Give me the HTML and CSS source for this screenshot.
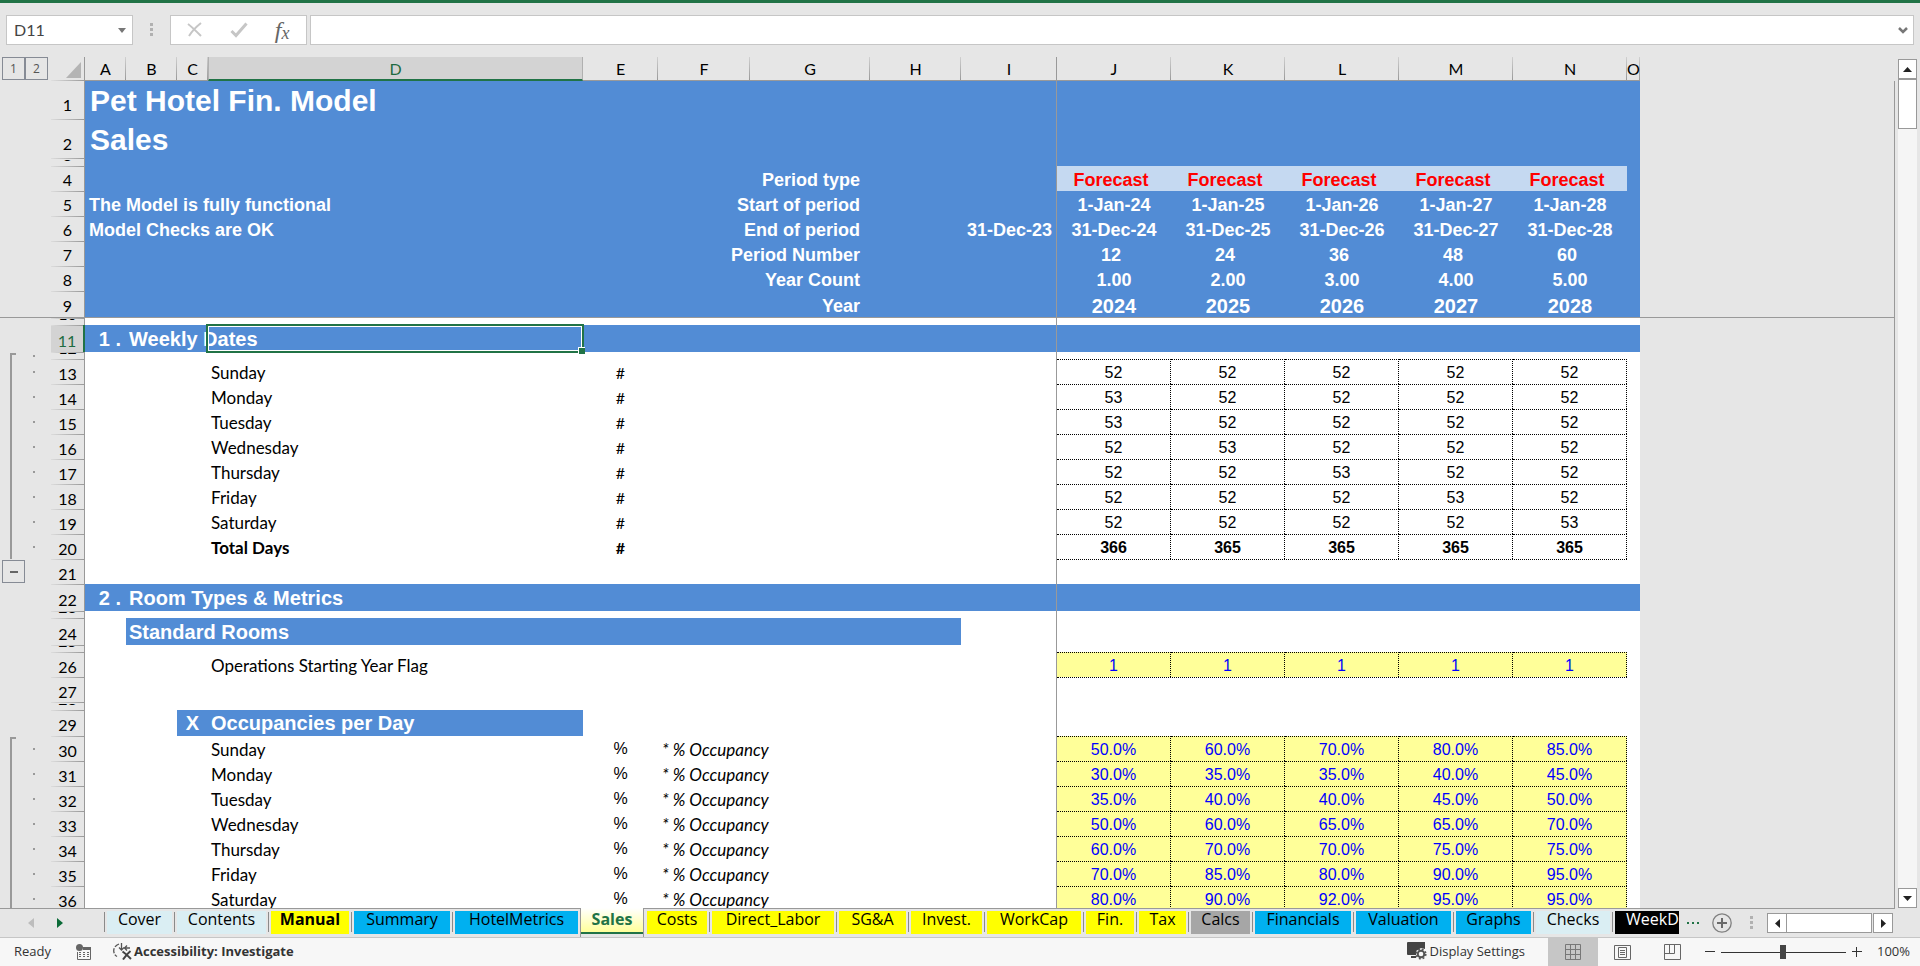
FILE: index.html
```html
<!DOCTYPE html>
<html lang="en">
<head>
<meta charset="utf-8">
<title>Pet Hotel Fin. Model - Sales</title>
<link rel="stylesheet" href="styles.css">
</head>
<body>
<div class="app">
<header class="formula-bar">
  <div class="namebox"><input type="text" value="D11" aria-label="Name box"><button type="button" aria-label="Open name list"><svg width="8" height="5" viewBox="0 0 8 5"><path d="M0 0h8L4 5z" fill="#777"/></svg></button></div>
  <svg class="grip" width="3" height="14" viewBox="0 0 3 14"><path d="M0 0h3v3H0zM0 5h3v3H0zM0 10h3v3H0z" fill="#b1b1b1"/></svg>
  <div class="fx-box">
    <button type="button" aria-label="Cancel"><svg width="18" height="16" viewBox="0 0 18 16"><path d="M2 2c4 3 9 8 13 12M15 1C10 5 6 9 3 14" fill="none" stroke="#c6c6c6" stroke-width="2"/></svg></button>
    <button type="button" aria-label="Enter"><svg width="18" height="16" viewBox="0 0 18 16"><path d="M1.500 9L6 13.500L16.500 1.500" fill="none" stroke="#c6c6c6" stroke-width="3"/></svg></button>
    <button type="button" class="fx" aria-label="Insert function"><i>f</i><i class="x">x</i></button>
  </div>
  <div class="formula"><input type="text" aria-label="Formula bar"><button type="button" aria-label="Expand formula bar"><svg width="10" height="7" viewBox="0 0 10 7"><path d="M1 1l4 4 4-4" fill="none" stroke="#777" stroke-width="2.500"/></svg></button></div>
</header>

<main class="sheet">
<div class="grid">
<table>
<colgroup><col class="cg"><col class="cr"><col class="ca"><col class="cb"><col class="cc"><col class="cd"><col class="ce"><col class="cf"><col class="cgg"><col class="ch"><col class="ci"><col class="cn"><col class="cn"><col class="cn"><col class="cn"><col class="cn"><col class="co"><col></colgroup>
<thead>
<tr><td class="levels"><div><button type="button">1</button><button type="button">2</button></div></td><td class="corner"><svg width="15" height="16" viewBox="0 0 15 16"><path d="M15 0v16H0z" fill="#b4b4b4"/></svg></td><th>A</th><th>B</th><th>C</th><th class="sel">D</th><th>E</th><th>F</th><th>G</th><th>H</th><th class="fzh">I</th><th>J</th><th>K</th><th>L</th><th>M</th><th>N</th><th>O</th><td></td></tr>
</thead>
<tbody>
<tr class="blue r38"><td class="gut"></td><th><span>1</span></th><td colspan="9" class="fz title">Pet Hotel Fin. Model</td><td colspan="6"></td><td class="out"></td></tr>
<tr class="blue r39"><td class="gut"></td><th><span>2</span></th><td colspan="9" class="fz title">Sales</td><td colspan="6"></td><td class="out"></td></tr>
<tr class="blue tiny8"><td class="gut"></td><th><span>3</span></th><td colspan="9" class="fz"></td><td colspan="6"></td><td class="out"></td></tr>
<tr class="blue hd"><td class="gut"></td><th><span>4</span></th><td colspan="4"></td><td colspan="3" class="cap">Period type</td><td></td><td class="fz"></td><td class="fc">Forecast</td><td class="fc">Forecast</td><td class="fc">Forecast</td><td class="fc">Forecast</td><td class="fc">Forecast</td><td></td><td class="out"></td></tr>
<tr class="blue hd"><td class="gut"></td><th><span>5</span></th><td colspan="4" class="msg">The Model is fully functional</td><td colspan="3" class="cap">Start of period</td><td></td><td class="fz"></td><td class="m">1-Jan-24</td><td class="m">1-Jan-25</td><td class="m">1-Jan-26</td><td class="m">1-Jan-27</td><td class="m">1-Jan-28</td><td></td><td class="out"></td></tr>
<tr class="blue hd"><td class="gut"></td><th><span>6</span></th><td colspan="4" class="msg">Model Checks are OK</td><td colspan="3" class="cap">End of period</td><td></td><td class="fz r">31-Dec-23</td><td class="m">31-Dec-24</td><td class="m">31-Dec-25</td><td class="m">31-Dec-26</td><td class="m">31-Dec-27</td><td class="m">31-Dec-28</td><td></td><td class="out"></td></tr>
<tr class="blue hd"><td class="gut"></td><th><span>7</span></th><td colspan="4"></td><td colspan="3" class="cap">Period Number</td><td></td><td class="fz"></td><td class="m pn">12</td><td class="m pn">24</td><td class="m pn">36</td><td class="m pn">48</td><td class="m pn">60</td><td></td><td class="out"></td></tr>
<tr class="blue hd"><td class="gut"></td><th><span>8</span></th><td colspan="4"></td><td colspan="3" class="cap">Year Count</td><td></td><td class="fz"></td><td class="m">1.00</td><td class="m">2.00</td><td class="m">3.00</td><td class="m">4.00</td><td class="m">5.00</td><td></td><td class="out"></td></tr>
<tr class="blue hd r26"><td class="gut"></td><th><span>9</span></th><td colspan="4"></td><td colspan="3" class="cap">Year</td><td></td><td class="fz"></td><td class="m yr">2024</td><td class="m yr">2025</td><td class="m yr">2026</td><td class="m yr">2027</td><td class="m yr">2028</td><td></td><td class="out"></td></tr>
<tr class="tiny8 freeze"><td class="gut"></td><th><span>10</span></th><td colspan="9" class="fz"></td><td colspan="6"></td><td class="out"></td></tr>
<tr class="blue sec"><td class="gut"></td><th class="sel"><span>11</span></th><td class="num">1 .</td><td colspan="2">Weekly Dates</td><td class="cur"><div class="cell"><div class="cursor"></div></div></td><td colspan="5" class="fz"></td><td colspan="6"></td><td class="out"></td></tr>
<tr class="tiny7"><td class="gut in first"></td><th><span>12</span></th><td colspan="9" class="fz"></td><td colspan="6"></td><td class="out"></td></tr>
<tr><td class="gut in"></td><th><span>13</span></th><td colspan="3"></td><td class="lb">Sunday</td><td class="u">#</td><td colspan="4" class="fz"></td><td class="n">52</td><td class="n">52</td><td class="n">52</td><td class="n">52</td><td class="n">52</td><td></td><td class="out"></td></tr>
<tr><td class="gut in"></td><th><span>14</span></th><td colspan="3"></td><td class="lb">Monday</td><td class="u">#</td><td colspan="4" class="fz"></td><td class="n">53</td><td class="n">52</td><td class="n">52</td><td class="n">52</td><td class="n">52</td><td></td><td class="out"></td></tr>
<tr><td class="gut in"></td><th><span>15</span></th><td colspan="3"></td><td class="lb">Tuesday</td><td class="u">#</td><td colspan="4" class="fz"></td><td class="n">53</td><td class="n">52</td><td class="n">52</td><td class="n">52</td><td class="n">52</td><td></td><td class="out"></td></tr>
<tr><td class="gut in"></td><th><span>16</span></th><td colspan="3"></td><td class="lb">Wednesday</td><td class="u">#</td><td colspan="4" class="fz"></td><td class="n">52</td><td class="n">53</td><td class="n">52</td><td class="n">52</td><td class="n">52</td><td></td><td class="out"></td></tr>
<tr><td class="gut in"></td><th><span>17</span></th><td colspan="3"></td><td class="lb">Thursday</td><td class="u">#</td><td colspan="4" class="fz"></td><td class="n">52</td><td class="n">52</td><td class="n">53</td><td class="n">52</td><td class="n">52</td><td></td><td class="out"></td></tr>
<tr><td class="gut in"></td><th><span>18</span></th><td colspan="3"></td><td class="lb">Friday</td><td class="u">#</td><td colspan="4" class="fz"></td><td class="n">52</td><td class="n">52</td><td class="n">52</td><td class="n">53</td><td class="n">52</td><td></td><td class="out"></td></tr>
<tr><td class="gut in"></td><th><span>19</span></th><td colspan="3"></td><td class="lb">Saturday</td><td class="u">#</td><td colspan="4" class="fz"></td><td class="n">52</td><td class="n">52</td><td class="n">52</td><td class="n">52</td><td class="n">53</td><td></td><td class="out"></td></tr>
<tr class="total"><td class="gut in"></td><th><span>20</span></th><td colspan="3"></td><td class="lb">Total Days</td><td class="u">#</td><td colspan="4" class="fz"></td><td class="n">366</td><td class="n">365</td><td class="n">365</td><td class="n">365</td><td class="n">365</td><td></td><td class="out"></td></tr>
<tr><td class="gut fold"><button type="button" aria-label="Collapse group"></button></td><th><span>21</span></th><td colspan="9" class="fz"></td><td colspan="5" class="under"></td><td></td><td class="out"></td></tr>
<tr class="blue sec"><td class="gut"></td><th><span>22</span></th><td class="num">2 .</td><td colspan="8" class="fz">Room Types &amp; Metrics</td><td colspan="6"></td><td class="out"></td></tr>
<tr class="tiny7"><td class="gut"></td><th><span>23</span></th><td colspan="9" class="fz"></td><td colspan="6"></td><td class="out"></td></tr>
<tr class="sec"><td class="gut"></td><th><span>24</span></th><td></td><td colspan="7" class="fill">Standard Rooms</td><td class="fz"></td><td colspan="6"></td><td class="out"></td></tr>
<tr class="tiny7"><td class="gut"></td><th><span>25</span></th><td colspan="9" class="fz"></td><td colspan="6"></td><td class="out"></td></tr>
<tr class="inp"><td class="gut"></td><th><span>26</span></th><td colspan="3"></td><td class="lb" colspan="2">Operations Starting Year Flag</td><td colspan="4" class="fz"></td><td class="n">1</td><td class="n">1</td><td class="n">1</td><td class="n">1</td><td class="n">1</td><td></td><td class="out"></td></tr>
<tr><td class="gut"></td><th><span>27</span></th><td colspan="9" class="fz"></td><td colspan="5" class="under"></td><td></td><td class="out"></td></tr>
<tr class="tiny8"><td class="gut"></td><th><span>28</span></th><td colspan="9" class="fz"></td><td colspan="6"></td><td class="out"></td></tr>
<tr class="sec r26"><td class="gut"></td><th><span>29</span></th><td colspan="2"></td><td class="fill xc">X</td><td class="fill">Occupancies per Day</td><td colspan="5" class="fz"></td><td colspan="6"></td><td class="out"></td></tr>
<tr class="inp"><td class="gut in first"></td><th><span>30</span></th><td colspan="3"></td><td class="lb">Sunday</td><td class="pc">%</td><td colspan="4" class="fz note">* % Occupancy</td><td class="n">50.0%</td><td class="n">60.0%</td><td class="n">70.0%</td><td class="n">80.0%</td><td class="n">85.0%</td><td></td><td class="out"></td></tr>
<tr class="inp"><td class="gut in"></td><th><span>31</span></th><td colspan="3"></td><td class="lb">Monday</td><td class="pc">%</td><td colspan="4" class="fz note">* % Occupancy</td><td class="n">30.0%</td><td class="n">35.0%</td><td class="n">35.0%</td><td class="n">40.0%</td><td class="n">45.0%</td><td></td><td class="out"></td></tr>
<tr class="inp"><td class="gut in"></td><th><span>32</span></th><td colspan="3"></td><td class="lb">Tuesday</td><td class="pc">%</td><td colspan="4" class="fz note">* % Occupancy</td><td class="n">35.0%</td><td class="n">40.0%</td><td class="n">40.0%</td><td class="n">45.0%</td><td class="n">50.0%</td><td></td><td class="out"></td></tr>
<tr class="inp"><td class="gut in"></td><th><span>33</span></th><td colspan="3"></td><td class="lb">Wednesday</td><td class="pc">%</td><td colspan="4" class="fz note">* % Occupancy</td><td class="n">50.0%</td><td class="n">60.0%</td><td class="n">65.0%</td><td class="n">65.0%</td><td class="n">70.0%</td><td></td><td class="out"></td></tr>
<tr class="inp"><td class="gut in"></td><th><span>34</span></th><td colspan="3"></td><td class="lb">Thursday</td><td class="pc">%</td><td colspan="4" class="fz note">* % Occupancy</td><td class="n">60.0%</td><td class="n">70.0%</td><td class="n">70.0%</td><td class="n">75.0%</td><td class="n">75.0%</td><td></td><td class="out"></td></tr>
<tr class="inp"><td class="gut in"></td><th><span>35</span></th><td colspan="3"></td><td class="lb">Friday</td><td class="pc">%</td><td colspan="4" class="fz note">* % Occupancy</td><td class="n">70.0%</td><td class="n">85.0%</td><td class="n">80.0%</td><td class="n">90.0%</td><td class="n">95.0%</td><td></td><td class="out"></td></tr>
<tr class="inp"><td class="gut in"></td><th><span>36</span></th><td colspan="3"></td><td class="lb">Saturday</td><td class="pc">%</td><td colspan="4" class="fz note">* % Occupancy</td><td class="n">80.0%</td><td class="n">90.0%</td><td class="n">92.0%</td><td class="n">95.0%</td><td class="n">95.0%</td><td></td><td class="out"></td></tr>
</tbody>
</table>
</div>
<div class="vscroll">
  <button type="button" aria-label="Scroll up"><svg width="9" height="5" viewBox="0 0 9 5"><path d="M4.500 0L9 5H0z" fill="#222"/></svg></button>
  <div class="vthumb"></div>
  <button type="button" class="down" aria-label="Scroll down"><svg width="9" height="5" viewBox="0 0 9 5"><path d="M0 0h9L4.500 5z" fill="#222"/></svg></button>
</div>
</main>

<nav class="tabs">
  <div class="tabnav">
    <button type="button" aria-label="Previous sheets"><svg width="6" height="10" viewBox="0 0 6 10"><path d="M6 0v10L0 5z" fill="#bdbdbd"/></svg></button>
    <button type="button" aria-label="Next sheets"><svg width="6" height="10" viewBox="0 0 6 10"><path d="M0 0v10l6-5z" fill="#0b6b38"/></svg></button>
  </div>
  <div class="tablist">
    <button type="button" class="tab pale w70"><span>Cover</span></button>
    <button type="button" class="tab pale w94"><span>Contents</span></button>
    <button type="button" class="tab yellow w83 strong"><span>Manual</span></button>
    <button type="button" class="tab cyan w101"><span>Summary</span></button>
    <button type="button" class="tab cyan w128"><span>HotelMetrics</span></button>
    <button type="button" class="tab active w64"><span>Sales</span></button>
    <button type="button" class="tab yellow w65"><span>Costs</span></button>
    <button type="button" class="tab yellow w127"><span>Direct_Labor</span></button>
    <button type="button" class="tab yellow w72"><span>SG&amp;A</span></button>
    <button type="button" class="tab yellow w76"><span>Invest.</span></button>
    <button type="button" class="tab yellow w99"><span>WorkCap</span></button>
    <button type="button" class="tab yellow w53"><span>Fin.</span></button>
    <button type="button" class="tab yellow w52"><span>Tax</span></button>
    <button type="button" class="tab gray w64"><span>Calcs</span></button>
    <button type="button" class="tab cyan w101"><span>Financials</span></button>
    <button type="button" class="tab cyan w100"><span>Valuation</span></button>
    <button type="button" class="tab cyan w80"><span>Graphs</span></button>
    <button type="button" class="tab pale w79"><span>Checks</span></button>
    <button type="button" class="tab black w101"><span>WeekDays</span></button>
  </div>
  <div class="tabend">
    <button type="button" class="more" aria-label="More sheets"><svg width="14" height="3" viewBox="0 0 14 3"><path d="M0 0h2v2H0zM5 0h2v2H5zM10 0h2v2h-2z" fill="#217346"/></svg></button>
    <button type="button" class="add" aria-label="New sheet"><svg width="20" height="20" viewBox="0 0 20 20"><circle cx="10" cy="10" r="9.200" fill="none" stroke="#808080" stroke-width="1.300"/><path d="M10 5v10M5 10h10" stroke="#6a6a6a" stroke-width="2"/></svg></button>
    <svg class="grip2" width="3" height="14" viewBox="0 0 3 14"><path d="M0 0h3v3H0zM0 5h3v3H0zM0 10h3v3H0z" fill="#b1b1b1"/></svg>
    <div class="hscroll">
      <button type="button" aria-label="Scroll left"><svg width="5" height="9" viewBox="0 0 5 9"><path d="M5 0v9L0 4.500z" fill="#222"/></svg></button>
      <div class="hthumb"></div>
      <button type="button" aria-label="Scroll right"><svg width="5" height="9" viewBox="0 0 5 9"><path d="M0 0v9l5-4.500z" fill="#222"/></svg></button>
    </div>
  </div>
  <div class="tabpad"></div>
</nav>

<footer class="status">
  <span class="ready">Ready</span>
  <button type="button" class="macro" aria-label="Record macro"><svg width="15" height="16" viewBox="0 0 15 16"><path d="M1.500 8v7.500h13v-12H8" fill="none" stroke="#666"/><path d="M7 3h8v3H7z" fill="#666"/><circle cx="3.500" cy="3.500" r="3.500" fill="#666"/><path d="M3 8.500h10M3 10.500h10M3 12.500h10" stroke="#666" stroke-dasharray="2 2"/></svg></button>
  <button type="button" class="acc"><svg width="19" height="18" viewBox="0 0 19 18"><path d="M6 2C2 3.500 0 7 1 10.500c.5 2 1.500 3 3 4" fill="none" stroke="#555" stroke-width="1.300" stroke-dasharray="5 1.500"/><path d="M8.500 1v7M6 5.500l2.500 2.500L11 5.500M11 6h6M14 3.500l-2.500 2.500L14 8.500" fill="none" stroke="#555" stroke-width="1.300"/><path d="M9.500 9.500c3 2 5 4 8.500 7.500M17.500 9c-3 2.500-5 5-7.500 8.500" fill="none" stroke="#444" stroke-width="2"/></svg>Accessibility: Investigate</button>
  <div class="right">
    <button type="button" class="disp"><svg width="20" height="18" viewBox="0 0 20 18"><path d="M1 0h17v7l-4-1-5 3v4H1a1 1 0 0 1-1-1V1a1 1 0 0 1 1-1zM4 14h5v2H4z" fill="#444"/><circle cx="14" cy="12" r="3.300" fill="none" stroke="#555" stroke-width="2"/><circle cx="14" cy="12" r="4.800" fill="none" stroke="#555" stroke-width="1.600" stroke-dasharray="1.900 1.900"/></svg>Display Settings</button>
    <button type="button" class="view on" aria-label="Normal view"><svg width="16" height="16" viewBox="0 0 16 16"><path d="M.5.500h15v15H.5zM.5 5.500h15M.5 10.500h15M5.500.500v15M10.500.500v15" fill="none" stroke="#777"/></svg></button>
    <button type="button" class="view" aria-label="Page layout"><svg width="17" height="15" viewBox="0 0 17 15"><path d="M.5.500h16v14H.5zM4.500 2.500h8v10h-8zM6 5.500h5M6 7.500h5M6 9.500h5" fill="none" stroke="#666"/></svg></button>
    <button type="button" class="view" aria-label="Page break preview"><svg width="17" height="16" viewBox="0 0 17 16"><path d="M.5.500h16v15H.5zM.5 9.500h10v-9M5.500.500v9" fill="none" stroke="#666"/></svg></button>
    <button type="button" class="zoom minus" aria-label="Zoom out"><svg width="10" height="10" viewBox="0 0 10 10"><path d="M0 4.500h10" stroke="#333"/></svg></button>
    <input type="range" class="slider" min="0" max="100" value="50" aria-label="Zoom">
    <button type="button" class="zoom" aria-label="Zoom in"><svg width="10" height="10" viewBox="0 0 10 10"><path d="M0 4.500h10M4.500 0v10" stroke="#333"/></svg></button>
    <button type="button" class="pct">100%</button>
  </div>
</footer>
</div>
</body>
</html>
```

FILE: styles.css
```css
* { box-sizing: border-box; }
body { margin: 0; background: #e6e6e6; color: #000; font-family: "Open Sans", "Noto Sans", sans-serif; }
button, input { font: inherit; color: inherit; margin: 0; padding: 0; border: 0; background: none; border-radius: 0; }
button { display: flex; align-items: center; justify-content: center; }
.app { display: flex; flex-direction: column; height: 100vh; border-top: 3px solid #217346; }

/* formula bar */
.formula-bar { display: flex; align-items: flex-start; height: 54px; padding: 12px 6px 0; }
.namebox, .fx-box, .formula { display: flex; height: 30px; background: #fff; border: 1px solid #c6c6c6; }
.namebox { width: 127px; font: 16px "Lato", sans-serif; color: #444; }
.namebox input { flex: 1; min-width: 0; padding: 0 0 2px 7px; }
.namebox button { width: 20px; }
.grip { margin: 8px 17px 0; }
.fx-box { width: 137px; padding: 0 2px; }
.fx-box button { flex: 1; }
.fx { font: 24px "Liberation Serif", serif; color: #666; }
.fx .x { font-size: 18px; padding-top: 6px; }
.formula { flex: 1; margin-left: 3px; }
.formula input { flex: 1; min-width: 0; }
.formula button { width: 20px; }

/* worksheet */
.sheet { flex: 1; min-height: 0; display: flex; overflow: hidden; }
.grid { flex: 1; min-width: 0; overflow: hidden; }
table { width: 100%; table-layout: fixed; border-collapse: separate; border-spacing: 0; font: 16px/20px "Lato", sans-serif; }
.cg { width: 51px; } .cr { width: 34px; } .ca { width: 41px; } .cb { width: 51px; } .cc { width: 31px; }
.cd { width: 375px; } .ce { width: 75px; } .cf { width: 92px; } .cgg { width: 120px; } .ch { width: 91px; }
.ci { width: 96px; } .cn { width: 114px; } .co { width: 13px; }
td, th { padding: 0; white-space: nowrap; vertical-align: bottom; text-align: left; font-weight: 400; }
tbody td { background: #fff; }

thead tr { height: 24px; }
thead th { text-align: center; border-bottom: 1px solid #999; background: linear-gradient(#d0d0d0, #999) right / 1px 100% no-repeat; line-height: 18px; padding-bottom: 2px; }
thead th.sel { background: #d3d3d3; border-bottom: 2px solid #217346; border-right: 1px solid #b0b0b0; border-left: 1px solid #b0b0b0; color: #1e6b41; padding-bottom: 1px; }
thead th.fzh { background: linear-gradient(#999, #999) right / 1px 100% no-repeat; }
.levels div { display: flex; padding-left: 2px; }
.levels button { width: 23px; height: 23px; border: 1px solid #868b95; color: #555; font: 12px "Open Sans", sans-serif; }
.levels { vertical-align: top; }
.corner { background: linear-gradient(#999, #999) right / 1px 100% no-repeat, linear-gradient(90deg, #e0e0e0, #999) bottom / 100% 1px no-repeat; }
.corner svg { display: block; margin: 0 0 3px 15px; }

tbody tr { height: 25px; }
tbody .r26 { height: 26px; }
tbody .r38 { height: 38px; }
tbody .r39 { height: 39px; }
tbody .sec { height: 27px; }
tbody .sec.r26 { height: 26px; }
tbody .tiny8 { height: 8px; }
tbody .tiny7 { height: 7px; }
tbody th { text-align: center; border-right: 1px solid #999; background: linear-gradient(90deg, #dcdcdc, #999) top / 100% 1px no-repeat; line-height: 18px; padding-bottom: 1px; }
tbody tr:first-child th { background: none; }
tbody th span { display: flex; justify-content: center; align-items: flex-end; }
.r38 th, .r39 th { padding-bottom: 5px; }
.hd th, .sec th { padding-bottom: 2px; }
.tiny8 th, .tiny7 th { padding-bottom: 0; }
.tiny8 th span, .tiny7 th span { height: 6px; padding-bottom: 2px; overflow: hidden; }
tbody th.sel { background-color: #d3d3d3; color: #1e6b41; border-right: 2px solid #217346; }
tbody td.gut { background: none; }
tbody td.gut.in { background: linear-gradient(#999, #999) 10px 0 / 2px 100% no-repeat, linear-gradient(#999, #999) 33px 50% / 2px 2px no-repeat; }
tbody td.gut.first { background: linear-gradient(#999, #999) 10px 1px / 2px 100% no-repeat, linear-gradient(#999, #999) 10px 1px / 6px 2px no-repeat, linear-gradient(#999, #999) 33px 50% / 2px 2px no-repeat; }
.fold { vertical-align: middle; padding-left: 2px; }
.fold button { width: 23px; height: 23px; border: 1px solid #868b95; background: linear-gradient(#666, #666) center / 8px 2px no-repeat; }
tbody td.out { background: none; border-right: 1px solid #999; }
tbody .fz { border-right: 1px solid #999; }
.freeze td, tbody .freeze td.out, .freeze th { border-top: 1px solid #999; }

.blue td, td.fill { background: #528cd5; color: #fff; font-family: "Liberation Sans", Arial, sans-serif; font-weight: 700; }
tbody .blue td.out, tbody .blue td.gut { background: none; }
.title { font-size: 30px; line-height: 34px; padding: 0 0 1px 5px; }
.hd { font-size: 18px; }
.hd th { font-size: 16px; }
.hd td { padding-bottom: 1px; }
.msg { padding-left: 4px; }
td.cap { text-align: right; padding-right: 10px; }
td.r { text-align: right; padding-right: 4px; }
td.m, td.fc { text-align: center; }
td.pn { padding-right: 6px; }
.blue td.fc { background: #c5d9f1; color: #f00; padding-right: 6px; }
.hd td.yr { font-size: 20px; }

.sec td { font-size: 20px; line-height: 24px; padding: 0 0 1px 3px; }
.sec td.num { text-align: right; padding-right: 5px; }
.sec td.xc { text-align: center; padding-left: 0; }
.sec td.cur { padding: 0; }
.cell { position: relative; height: 27px; }
.cursor { position: absolute; inset: -1px -1px -1px -2px; border: 2px solid #217346; box-shadow: inset 0 0 0 1px #fff; }
.cursor::after { content: ""; position: absolute; right: -3px; bottom: -3px; width: 6px; height: 6px; background: #217346; border-top: 1px solid #fff; border-left: 1px solid #fff; }

.lb { padding: 0 0 1px 3px; font-size: 17px; }
.u { text-align: center; padding-bottom: 1px; }
.pc { text-align: center; font-family: "Liberation Sans", Arial, sans-serif; vertical-align: middle; padding-top: 1px; }
.note { font-style: italic; padding: 0 0 1px 4px; font-size: 17px; }
.n { font-family: "Liberation Sans", Arial, sans-serif; text-align: center; vertical-align: middle; padding-top: 1px; border-top: 1px dotted #000; border-right: 1px dotted #000; }
.under { border-top: 1px dotted #000; }
.inp td.n { background: #ffff99; color: #00f; }
.total td { font-weight: 700; }

.vscroll { display: flex; flex-direction: column; width: 19px; margin: 2px 3px 0; background: #f5f5f5; }
.vscroll button { height: 20px; background: #fff; border: 1px solid #999; }
.vthumb { height: 50px; background: #fff; border: 1px solid #999; }
.vscroll .down { margin-top: auto; }

/* sheet tabs */
.tabs { display: flex; height: 30px; border-bottom: 1px solid #c6c6c6; }
.tabnav { display: flex; width: 104px; border-top: 1px solid #999; padding-left: 28px; gap: 23px; }
.tablist { flex: 1; min-width: 0; display: flex; overflow: hidden; }
.tab { flex: none; display: flex; align-items: flex-start; border-top: 1px solid #999; padding: 2px 2px 0 3px; background: linear-gradient(#8a8a8a, #8a8a8a) 0 3px / 1px 20px no-repeat; font-size: 16px; line-height: 17px; }
.tab span { flex: 1; height: 23px; text-align: center; }
.pale span { background: #daeef3; }
.yellow span { background: #ff0; }
.cyan span { background: #00b0f0; }
.gray span { background: #a6a6a6; }
.black span { background: #000; color: #fff; text-align: left; padding-left: 11px; }
.strong { font-weight: 700; }
.tab.active { border-width: 0 1px; border-style: solid; border-color: #999; padding: 3px 0 0; background: linear-gradient(#fff, #ffff99) top / 100% 24px no-repeat; color: #217346; font-weight: 700; }
.tab.active span { border-bottom: 2px solid #217346; }
.active + .tab { background: none; }
.w52 { width: 52px; } .w53 { width: 53px; } .w64 { width: 64px; } .w65 { width: 65px; } .w70 { width: 70px; }
.w72 { width: 72px; } .w76 { width: 76px; } .w79 { width: 79px; } .w80 { width: 80px; } .w83 { width: 83px; }
.w94 { width: 94px; } .w99 { width: 99px; } .w100 { width: 100px; } .w101 { width: 101px; } .w127 { width: 127px; } .w128 { width: 128px; }
.tabend { display: flex; align-items: center; width: 216px; border-top: 1px solid #999; padding: 0 2px 0 8px; }
.add { margin-left: 11px; }
.grip2 { margin: 0 14px 0 18px; }
.hscroll { flex: 1; display: flex; height: 20px; }
.hscroll button { width: 20px; background: #fff; border: 1px solid #999; }
.hthumb { flex: 1; background: #fff; border: 1px solid #999; border-left: 0; margin-right: 1px; }
.tabpad { width: 25px; }

/* status bar */
.status { display: flex; align-items: center; height: 28px; background: #f7f7f7; color: #333; font-size: 13px; line-height: 18px; padding: 0 10px 0 14px; }
.ready, .acc, .disp, .pct { padding-bottom: 2px; }
.macro { margin: 0 22px 0 25px; }
.acc { font-weight: 700; gap: 2px; }
.right { display: flex; align-items: center; margin-left: auto; height: 28px; }
.disp { gap: 2px; margin-right: 23px; }
.view { width: 50px; height: 28px; }
.view.on { background: #c6c6c6; }
.zoom.minus { margin-left: 7px; }
.slider { appearance: none; width: 125px; height: 14px; margin: 0 6px; background: linear-gradient(#333, #333) center / 100% 1px no-repeat; }
.slider::-webkit-slider-thumb { appearance: none; width: 6px; height: 14px; background: #444; border: 0; }
.pct { margin-left: 15px; }
```
